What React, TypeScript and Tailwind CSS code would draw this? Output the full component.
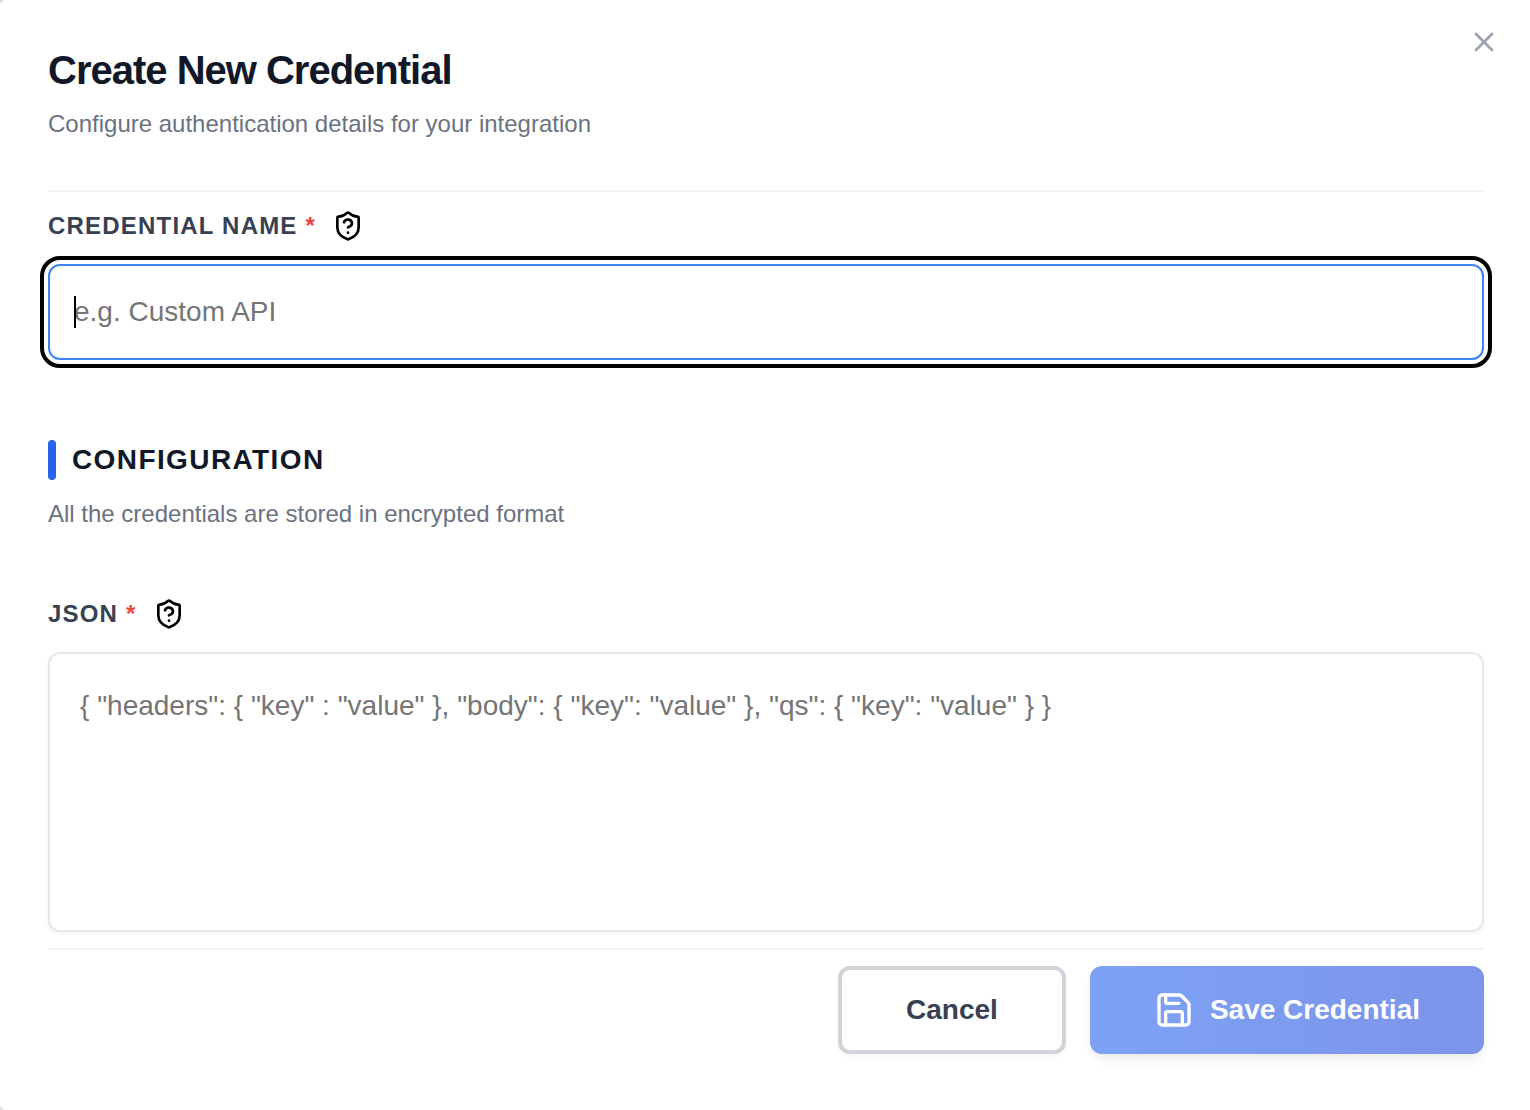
import { useState } from 'react';
import { Save, X } from 'lucide-react';

interface FieldLabelProps {
  htmlFor: string;
  text: string;
}

function ShieldQuestion() {
  return (
    <svg
      className="size-8 text-black"
      fill="none"
      stroke="currentColor"
      strokeWidth={2}
      strokeLinecap="round"
      strokeLinejoin="round"
      viewBox="0 0 24 24"
      aria-hidden="true"
    >
      <path d="M20 13c0 5-3.5 7.5-7.66 8.95a1 1 0 0 1-.67-.01C7.5 20.5 4 18 4 13V6a1 1 0 0 1 1-1c2 0 4.5-1.2 6.24-2.72a1.17 1.17 0 0 1 1.52 0C14.51 3.81 17 5 19 5a1 1 0 0 1 1 1z" />
      <path d="M9 9.2a3.1 3.1 0 0 1 6 .8c0 2-3 3-3 3" />
      <path d="M12 17h.01" />
    </svg>
  );
}

function FieldLabel({ htmlFor, text }: FieldLabelProps) {
  return (
    <div className="flex items-center gap-4">
      <label
        htmlFor={htmlFor}
        className="text-2xl leading-8 font-bold tracking-[1.2px] uppercase text-[#374151]"
      >
        {text} <span className="text-[#ef4444]">*</span>
      </label>
      <ShieldQuestion />
    </div>
  );
}

export default function App() {
  const [name, setName] = useState('');
  const [json, setJson] = useState('');

  return (
    <div className="bg-[#e0e0e0]">
      <main className="relative min-h-screen rounded-l-md bg-white pt-11 pr-[46px] pb-14 pl-12 font-['Liberation_Sans',Arial,sans-serif]">
        {/* Header */}
        <header className="border-b-2 border-[#f3f4f6] pb-[50px]">
          <h1 className="text-[40px] leading-[52px] font-bold tracking-[-1px] text-[#111827]">
            Create New Credential
          </h1>
          <p className="mt-3 text-2xl leading-8 text-[#6b7280]">
            Configure authentication details for your integration
          </p>
        </header>

        <button type="button" aria-label="Close" className="absolute top-[26px] right-[30px] text-[#9ca3af]">
          <X className="size-8" strokeWidth={2} />
        </button>

        <form onSubmit={(e) => e.preventDefault()}>
          {/* Credential name */}
          <div className="pt-[18px]">
            <FieldLabel htmlFor="credential-name" text="Credential Name" />
            <div className="relative mt-[22px]">
              <input
                id="credential-name"
                type="text"
                autoFocus
                required
                value={name}
                onChange={(e) => setName(e.target.value)}
                placeholder="e.g. Custom API"
                className={`peer block h-24 w-full rounded-xl border-2 border-[#3b82f6] px-6 text-[28px] text-[#111827] outline-4 outline-offset-4 outline-black placeholder:text-[#757575] ${
                  name ? 'caret-black' : 'caret-transparent'
                }`}
              />
              {/* Thick caret while the field is empty */}
              {!name && (
                <span className="pointer-events-none absolute top-8 left-[26px] hidden h-8 w-[2px] bg-black peer-focus:block" />
              )}
            </div>
          </div>

          {/* Configuration */}
          <section className="mt-20">
            <h2 className="flex items-center gap-4 text-[28px] leading-10 font-bold tracking-[1.4px] uppercase text-[#111827]">
              <span className="h-10 w-2 rounded-full bg-[#2563eb]" />
              Configuration
            </h2>
            <p className="mt-4 text-2xl leading-9 text-[#6b7280]">
              All the credentials are stored in encrypted format
            </p>
          </section>

          <div className="mt-[66px]">
            <FieldLabel htmlFor="credential-json" text="JSON" />
            <textarea
              id="credential-json"
              required
              value={json}
              onChange={(e) => setJson(e.target.value)}
              placeholder={'{ "headers": { "key" : "value" }, "body": { "key": "value" }, "qs": { "key": "value" } }'}
              className="mt-[22px] block h-[280px] w-full resize-none rounded-xl border-2 border-[#e5e7eb] px-[30px] py-8 text-[28px] leading-10 text-[#111827] shadow-[0_2px_4px_rgba(0,0,0,0.05)] placeholder:text-[#757575]"
            />
          </div>

          {/* Actions */}
          <footer className="mt-4 flex justify-end gap-6 border-t-2 border-[#f3f4f6] pt-4">
            <button
              type="button"
              className="h-[88px] rounded-xl border-4 border-[#d1d5db] bg-white px-16 text-[28px] font-bold text-[#374151] shadow-[0_2px_4px_rgba(0,0,0,0.05)]"
            >
              Cancel
            </button>
            <button
              type="submit"
              disabled={!name || !json}
              className="flex h-[88px] items-center gap-4 rounded-xl bg-linear-to-r from-[#7da2f5] to-[#7c94e9] px-16 text-[28px] font-bold text-white shadow-[0_8px_12px_-2px_rgba(0,0,0,0.06),0_4px_8px_-4px_rgba(0,0,0,0.06)]"
            >
              <Save className="size-10" />
              Save Credential
            </button>
          </footer>
        </form>
      </main>
    </div>
  );
}
